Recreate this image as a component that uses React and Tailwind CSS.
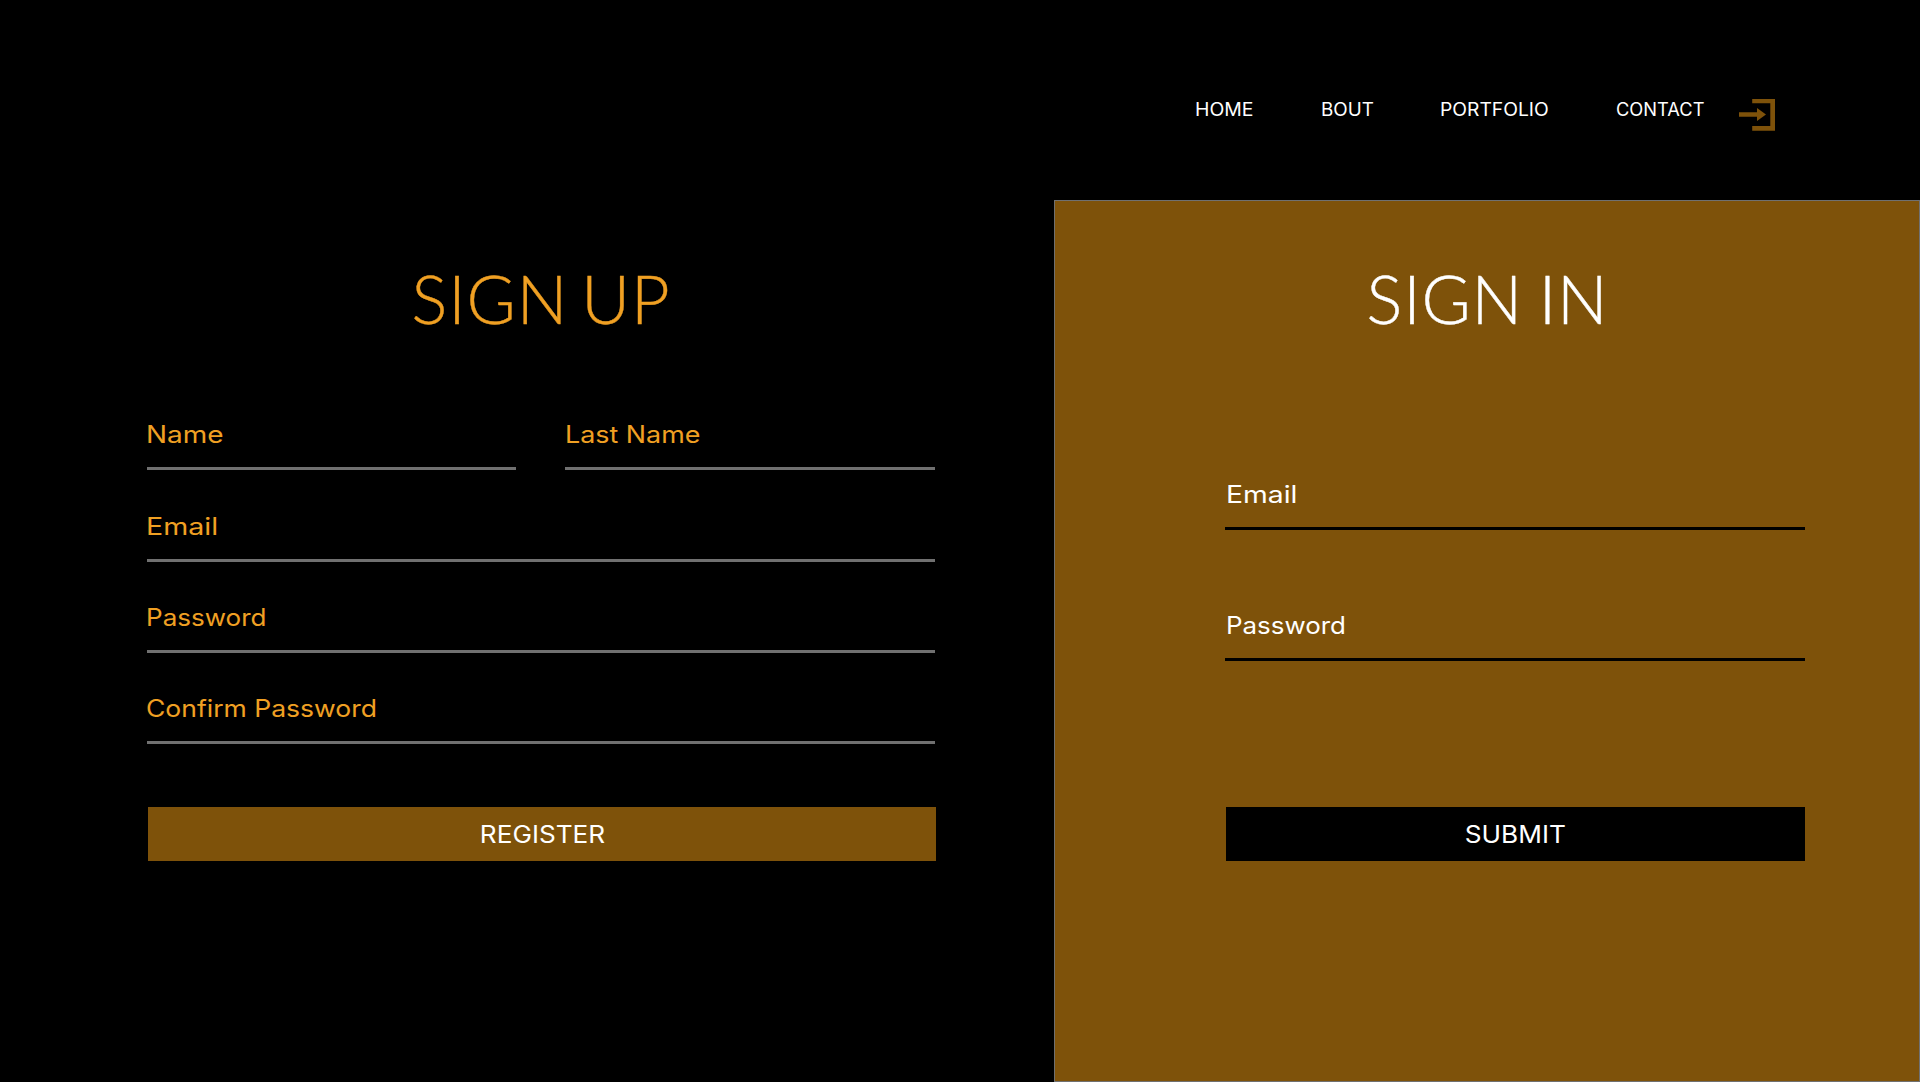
import React from "react";

const NAV = [
  { label: "HOME", cell: "w-[125.5px]", stretch: "scale-x-[1.08]" },
  { label: "BOUT", cell: "w-[119.5px]", stretch: "scale-x-[1.045]" },
  { label: "PORTFOLIO", cell: "w-[175.5px]", stretch: "scale-x-[1.07]" },
  { label: "CONTACT", cell: "w-[123.5px]", stretch: "scale-x-[1.015]" },
];

function Field({ label, stretch, className = "", line = "border-[#707070]", inset = "-ml-px" }) {
  return (
    <label className={`block h-[52px] border-b-[3px] pt-px leading-8 ${line} ${className}`}>
      <span className={`inline-block origin-left whitespace-nowrap ${inset} ${stretch}`}>{label}</span>
    </label>
  );
}

function Title({ children, className }) {
  return (
    <h1
      className={`whitespace-nowrap font-['Lato',sans-serif] text-[67px] font-light leading-[80px] [-webkit-text-stroke:0.4px_currentColor] ${className}`}
    >
      {children}
    </h1>
  );
}

function SignInIcon() {
  return (
    <svg viewBox="0 0 36 32" className="mt-px h-8 w-9" fill="#7e520a" aria-hidden="true">
      <path d="M13.2 0H36V31.7H13.2V27H31.3V4.3H13.2Z" />
      <path d="M0 13.3H18V9L27 15.5L18 22V17.7H0Z" />
    </svg>
  );
}

export default function App() {
  return (
    <div className="flex h-[1082px] w-[1920px] flex-col overflow-hidden bg-black font-['Inter',sans-serif] text-[24px] font-normal">
      <header className="flex h-[200px] shrink-0 items-start pl-[1195px] pt-[98px] text-[18px] leading-6 text-white">
        {NAV.map((item) => (
          <a key={item.label} className={`shrink-0 ${item.cell}`}>
            <span className={`inline-block origin-left ${item.stretch}`}>{item.label}</span>
          </a>
        ))}
        <SignInIcon />
      </header>
      <main className="flex flex-1">
        <section className="w-[1054px] pl-[147px] pr-[119px] pt-[58px] text-[#f0a023]">
          <Title className="pl-[264.5px] tracking-[0.9px] [word-spacing:-6px]">SIGN UP</Title>
          <div className="mt-20 flex gap-[49.5px]">
            <Field label="Name" stretch="scale-x-[1.165]" className="w-[368.5px]" />
            <Field label="Last Name" stretch="scale-x-[1.12]" className="w-[370px]" inset="ml-0" />
          </div>
          <Field label="Email" stretch="scale-x-[1.19]" className="mt-10" />
          <Field label="Password" stretch="scale-x-[1.085]" className="mt-[39px]" />
          <Field label="Confirm Password" stretch="scale-x-[1.105]" className="mt-[39px]" />
          <button className="ml-px mt-[63px] flex h-[54px] w-[788px] items-center justify-center bg-[#7e520a] pt-0.5 text-white">
            <span className="inline-block scale-x-[1.09]">REGISTER</span>
          </button>
        </section>
        <section className="w-[866px] border border-[#707070] bg-[#7e520a] pl-[170px] pr-[114px] pt-[57px] text-white">
          <Title className="pl-[141.5px] tracking-[0.8px] [word-spacing:-3px]">SIGN IN</Title>
          <Field label="Email" stretch="scale-x-[1.18]" className="mt-[140px]" line="border-black" inset="ml-px" />
          <Field label="Password" stretch="scale-x-[1.08]" className="mt-[79px]" line="border-black" inset="ml-px" />
          <button className="ml-px mt-[146px] flex h-[54px] w-[579px] items-center justify-center bg-black pt-0.5 text-white">
            <span className="inline-block scale-x-[1.092]">SUBMIT</span>
          </button>
        </section>
      </main>
    </div>
  );
}
